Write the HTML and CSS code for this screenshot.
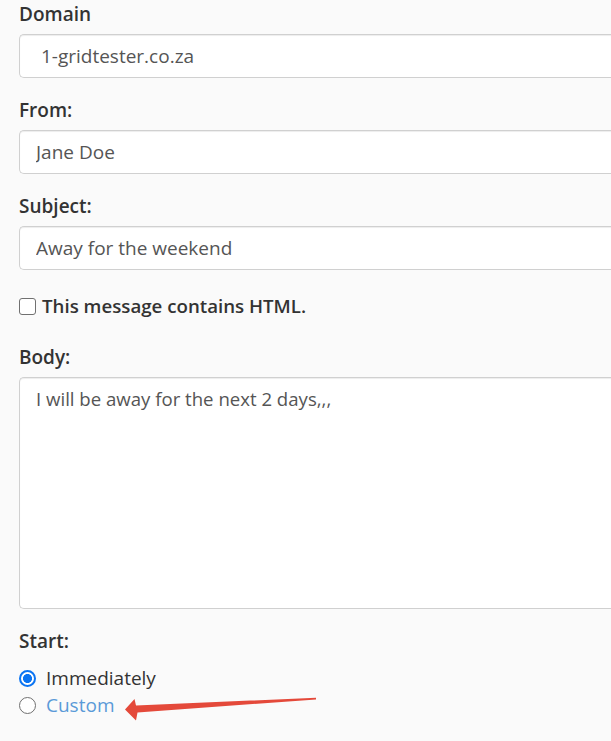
FILE: index.html
```html
<!DOCTYPE html>
<html lang="en">
<head>
<meta charset="utf-8">
<title>Autoresponder</title>
<link rel="stylesheet" href="styles.css">
</head>
<body>
<form class="form">
  <div class="group">
    <label class="label" for="domain">Domain</label>
    <input class="field" id="domain" type="text" value=" 1-gridtester.co.za">
  </div>
  <div class="group">
    <label class="label" for="from">From:</label>
    <input class="field" id="from" type="text" value="Jane Doe">
  </div>
  <div class="group">
    <label class="label" for="subject">Subject:</label>
    <input class="field" id="subject" type="text" value="Away for the weekend">
  </div>
  <div class="check-row">
    <input class="check" id="html" type="checkbox">
    <label class="check-label" for="html">This message contains HTML.</label>
  </div>
  <div class="group">
    <label class="label" for="body">Body:</label>
    <textarea class="field area" id="body">I will be away for the next 2 days,,,</textarea>
  </div>
  <div class="group start">
    <div class="label">Start:</div>
    <div class="radio-row">
      <input class="radio" id="imm" name="start" type="radio" checked>
      <label class="radio-label" for="imm">Immediately</label>
    </div>
    <div class="radio-row">
      <input class="radio" id="custom" name="start" type="radio">
      <label class="radio-label link" for="custom">Custom</label>
    </div>
  </div>
</form>
<svg class="arrow" width="611" height="741" viewBox="0 0 611 741" aria-hidden="true">
  <polygon points="125,709.5 134.5,699 136,705.5 316,697.8 316,699.4 137.5,712.5 136,720.5" fill="#e4493a"/>
</svg>
</body>
</html>
```
FILE: styles.css
```css
html, body {
  margin: 0;
  padding: 0;
  background: #fafafa;
  overflow: hidden;
}
body {
  width: 611px;
  height: 741px;
  position: relative;
  font-family: "Open Sans", "Noto Sans", sans-serif;
  font-size: 19px;
  color: #333;
}
.form {
  padding: 1px 0 0 19px;
  display: flex;
  flex-direction: column;
}
.group {
  display: flex;
  flex-direction: column;
  margin-bottom: 19px;
}
.label {
  display: block;
  font-weight: 600;
  line-height: 26px;
  margin-bottom: 7px;
  color: #333;
}
.field {
  box-sizing: border-box;
  width: 100%;
  height: 44px;
  margin: 0;
  padding: 0 16px;
  border: 1px solid #d0d0d0;
  border-right: none;
  border-radius: 5px 0 0 5px;
  background: #fff;
  box-shadow: inset 0 1px 1px rgba(0,0,0,0.075);
  font-family: "Open Sans", "Noto Sans", sans-serif;
  font-size: 19px;
  color: #555;
  outline: none;
}
.area {
  height: 232px;
  padding: 8px 16px;
  font-size: 18.6px;
  line-height: 26px;
  resize: none;
  display: block;
  overflow: hidden;
}
.check-row {
  display: flex;
  align-items: center;
  height: 34px;
  margin-bottom: 21px;
}
.check {
  appearance: none;
  box-sizing: border-box;
  width: 17px;
  height: 17px;
  margin: 0 6px 0 0;
  border: 1.5px solid #707070;
  border-radius: 3px;
  background: #fff;
}
.check-label {
  font-weight: 600;
  font-size: 18.7px;
  color: #333;
  line-height: 26px;
}
.start .label {
  margin-bottom: 11px;
}
.radio-row {
  display: flex;
  align-items: center;
  height: 27px;
}
.radio {
  appearance: none;
  box-sizing: border-box;
  width: 17px;
  height: 17px;
  margin: 0 10px 0 0;
  border: 1.5px solid #707070;
  border-radius: 50%;
  background: #fff;
}
.radio:checked {
  border: 2px solid #0b74f2;
  background: radial-gradient(circle, #0b74f2 0 4.2px, #fff 4.8px);
}
.radio-label {
  line-height: 27px;
  color: #333;
}
.link {
  color: #5a9ad8;
}
.arrow {
  position: absolute;
  left: 0;
  top: 0;
  pointer-events: none;
}
```
